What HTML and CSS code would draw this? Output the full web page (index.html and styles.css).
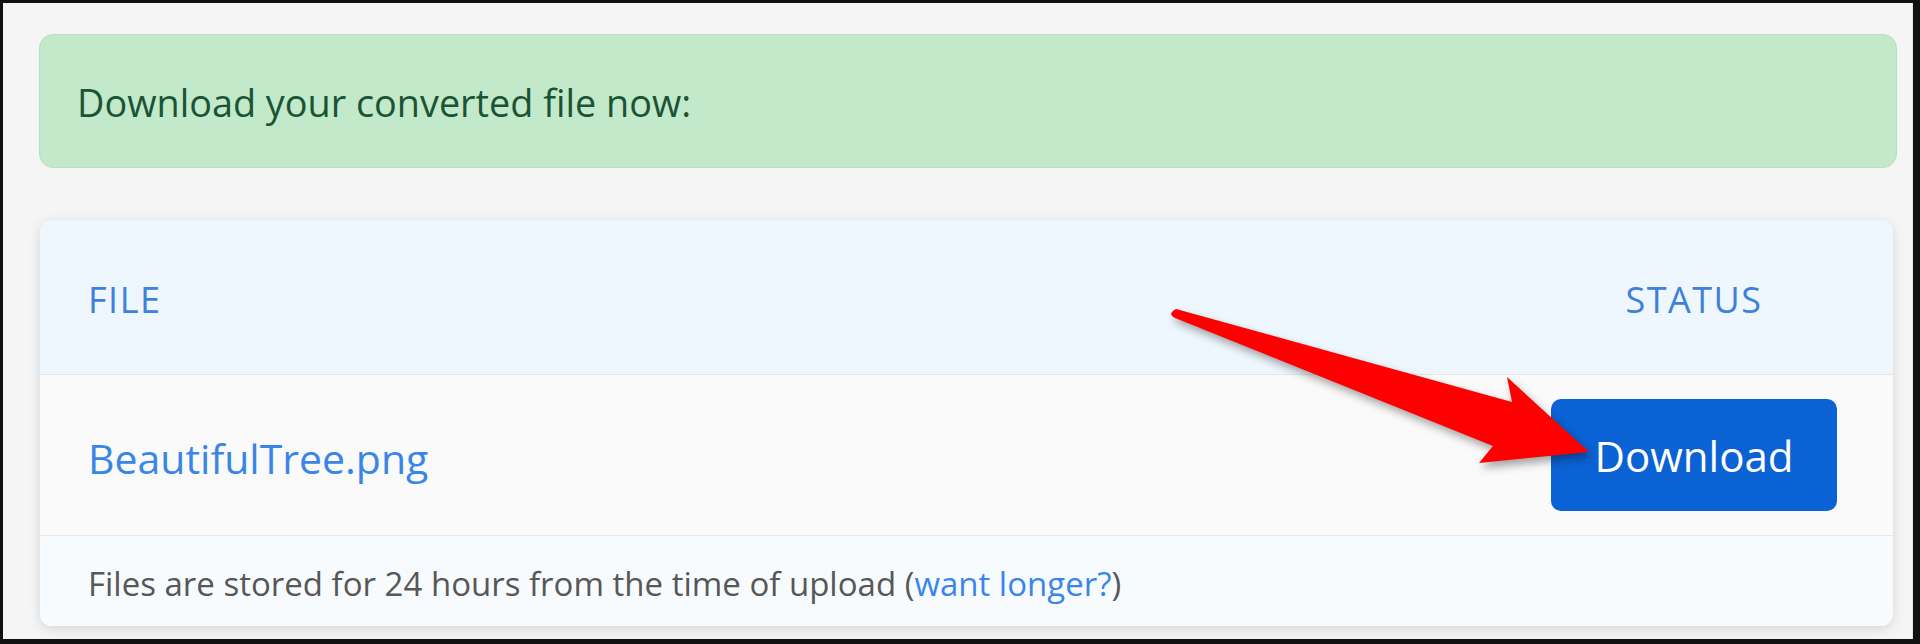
FILE: index.html
```html
<!DOCTYPE html>
<html lang="en">
<head>
<meta charset="utf-8">
<title>Download converted file</title>
<link rel="stylesheet" href="styles.css">
</head>
<body>
<div class="frame">
  <div class="alert">Download your converted file now:</div>
  <div class="card">
    <div class="row head">
      <div class="cell file">FILE</div>
      <div class="cell status">STATUS</div>
    </div>
    <div class="row item">
      <div class="cell file"><a class="file-link" href="#">BeautifulTree.png</a></div>
      <div class="cell status"><button class="btn">Download</button></div>
    </div>
    <div class="foot">Files are stored for 24 hours from the time of upload (<a class="more" href="#">want longer?</a>)</div>
  </div>
</div>
<svg class="arrow" width="1920" height="644" viewBox="0 0 1920 644" xmlns="http://www.w3.org/2000/svg">
  <path d="M 1176 309 L 1512 402 L 1507 377 L 1589 452 L 1479 463 L 1493 446 L 1175 318 Q 1167 314 1176 309 Z" fill="#ff0000"/>
</svg>
</body>
</html>
```
FILE: styles.css
```css
html, body {
  margin: 0;
  padding: 0;
}
body {
  background: #111;
  width: 1920px;
  height: 644px;
  overflow: hidden;
  position: relative;
  font-family: "Open Sans", "Noto Sans", sans-serif;
}
.frame {
  margin: 3px 7px 0 3px;
  height: 636px;
  box-sizing: border-box;
  background: #f5f5f5;
  padding: 31px 15px 0 36px;
  border-right: 1px solid #e4e4e4;
}
.alert {
  height: 134px;
  box-sizing: border-box;
  background: #c2e9ca;
  border: 1px solid #b6e2bf;
  border-radius: 14px;
  display: flex;
  align-items: center;
  padding: 2px 0 0 37px;
  color: #1b5434;
  font-size: 37.8px;
}
.card {
  margin: 52px 4px 0 1px;
  border-radius: 12px;
  overflow: hidden;
  box-shadow: 0 3px 12px rgba(0, 0, 0, 0.13);
  background: #fafafa;
}
.row {
  display: grid;
  grid-template-columns: 1fr 286px;
  align-items: center;
  padding: 0 56px 0 48px;
  border-bottom: 1px solid #e6e6e6;
}
.head {
  height: 155px;
  box-sizing: border-box;
  background: #eff7fe;
  color: #3f80da;
  font-size: 36px;
  font-weight: 500;
  letter-spacing: 1.5px;
  padding-top: 4px;
}
.status {
  text-align: center;
}
.item {
  height: 161px;
  box-sizing: border-box;
  background: #fafafa;
}
.file-link {
  color: #3a86e8;
  text-decoration: none;
  font-size: 41px;
  position: relative;
  top: 3px;
}
.btn {
  width: 286px;
  height: 112px;
  border: none;
  border-radius: 10px;
  background: #0b62d4;
  color: #ffffff;
  font-family: inherit;
  font-size: 42px;
  padding: 0;
}
.foot {
  height: 90px;
  box-sizing: border-box;
  background: #f8fbfe;
  display: flex;
  align-items: center;
  padding: 4px 0 0 48px;
  color: #575757;
  font-size: 33px;
}
.more {
  color: #3a86e8;
  text-decoration: none;
}
.arrow {
  position: absolute;
  left: 0;
  top: 0;
  pointer-events: none;
  filter: drop-shadow(3px 5px 4px rgba(0, 0, 0, 0.35));
}
```
